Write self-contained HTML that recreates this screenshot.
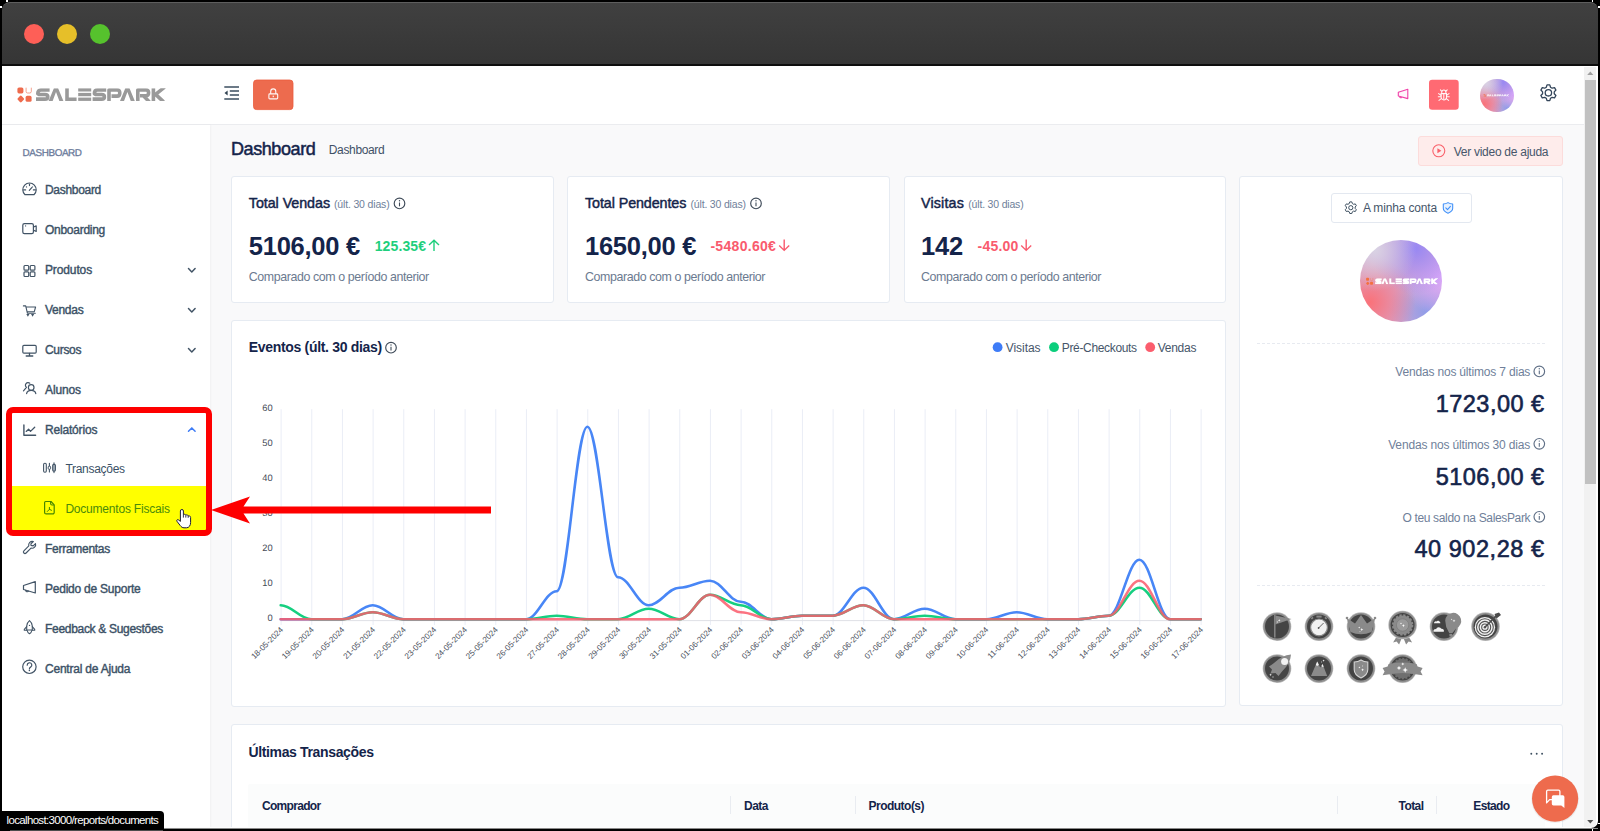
<!DOCTYPE html>
<html lang="pt">
<head>
<meta charset="utf-8">
<title>SalesPark - Dashboard</title>
<style>
*{box-sizing:border-box;margin:0;padding:0}
html,body{width:1600px;height:831px;overflow:hidden;background:#000}
body{position:relative;font-family:"Liberation Sans",sans-serif;}
.abs{position:absolute}
.t{position:absolute;white-space:pre;font-family:"Liberation Sans",sans-serif;}
svg text{font-family:"Liberation Sans",sans-serif;}
.card{position:absolute;background:#fff;border:1px solid #e6ebf2;border-radius:3px}
.ic{position:absolute;overflow:visible}
</style>
</head>
<body>
<!-- window chrome -->
<div class="abs" style="left:2px;top:2px;width:1596px;height:64px;border-radius:8px 8px 0 0;background:linear-gradient(#404040,#353535);border-top:1px solid #5e5e5e"></div>
<div class="abs" style="left:2px;top:64px;width:1596px;height:2px;background:#0d0d0d"></div>
<div class="abs" style="left:24px;top:24px;width:20px;height:20px;border-radius:50%;background:#fe5f57"></div>
<div class="abs" style="left:57px;top:24px;width:20px;height:20px;border-radius:50%;background:#e6bf29"></div>
<div class="abs" style="left:90px;top:24px;width:20px;height:20px;border-radius:50%;background:#56c22d"></div>

<!-- page -->
<div class="abs" id="page" style="left:2px;top:66px;width:1596px;height:762px;background:#f9f9fa;overflow:hidden"></div>
<!-- header -->
<div class="abs" style="left:2px;top:66px;width:1582px;height:59px;background:#fff;border-bottom:1px solid #ebecef"></div>
<!-- sidebar -->
<div class="abs" style="left:2px;top:125px;width:208px;height:703px;background:#fff;box-shadow:1px 0 2px rgba(0,0,0,0.035)"></div>

<!-- scrollbar -->
<div class="abs" style="left:1584px;top:66px;width:14px;height:762px;background:#fff"></div>
<div class="abs" style="left:1584px;top:67px;width:12px;height:761px;background:#f1f1f1"></div>
<div class="abs" style="left:1585px;top:80px;width:11px;height:404px;background:#c1c1c1"></div>
<svg class="ic" style="left:1584px;top:67px" width="12" height="12" viewBox="0 0 12 12"><path d="M3.2 8 L6.3 4.4 L9.4 8Z" fill="#a0a0a0"/></svg>
<svg class="ic" style="left:1584px;top:815.5px" width="12" height="12" viewBox="0 0 12 12"><path d="M3.2 4 L6.3 7.6 L9.4 4Z" fill="#505050"/></svg>

<!-- stat cards -->
<div class="card" style="left:231px;top:176px;width:323px;height:127px"></div>
<div class="card" style="left:567px;top:176px;width:323px;height:127px"></div>
<div class="card" style="left:904px;top:176px;width:322px;height:127px"></div>
<!-- chart card -->
<div class="card" style="left:231px;top:320px;width:995px;height:387px"></div>
<!-- right panel -->
<div class="card" style="left:1239px;top:176px;width:324px;height:530px"></div>
<!-- transactions card -->
<div class="card" style="left:231px;top:724px;width:1332px;height:120px"></div>
<div class="abs" style="left:248.4px;top:783.7px;width:1297px;height:45px;background:#fbfcfc;border-radius:2px 2px 0 0"></div>
<div class="abs" style="left:729.5px;top:796px;width:1px;height:18px;background:#e9ecf1"></div>
<div class="abs" style="left:854.5px;top:796px;width:1px;height:18px;background:#e9ecf1"></div>
<div class="abs" style="left:1336.5px;top:796px;width:1px;height:18px;background:#e9ecf1"></div>
<div class="abs" style="left:1436px;top:796px;width:1px;height:18px;background:#e9ecf1"></div>

<!-- "Ver video de ajuda" -->
<div class="abs" style="left:1418px;top:136px;width:145px;height:30px;background:#feeceb;border:1px solid #fcdcdb;border-radius:3px"></div>
<!-- "A minha conta" -->
<div class="abs" style="left:1331px;top:193px;width:141px;height:30px;background:#fff;border:1px solid #e3e8f0;border-radius:3px"></div>
<!-- dashed separators -->
<div class="abs" style="left:1257px;top:343px;width:288px;height:0;border-top:1px dashed #e7eaf0"></div>
<div class="abs" style="left:1257px;top:585.3px;width:288px;height:0;border-top:1px dashed #e7eaf0"></div>

<svg class="abs" style="left:0;top:0" width="1600" height="831" viewBox="0 0 1600 831">
<path d="M281.10 409.2V625M311.77 409.2V625M342.43 409.2V625M373.10 409.2V625M403.77 409.2V625M434.43 409.2V625M465.10 409.2V625M495.77 409.2V625M526.44 409.2V625M557.10 409.2V625M587.77 409.2V625M618.44 409.2V625M649.10 409.2V625M679.77 409.2V625M710.44 409.2V625M741.10 409.2V625M771.77 409.2V625M802.44 409.2V625M833.11 409.2V625M863.77 409.2V625M894.44 409.2V625M925.11 409.2V625M955.77 409.2V625M986.44 409.2V625M1017.11 409.2V625M1047.78 409.2V625M1078.44 409.2V625M1109.11 409.2V625M1139.78 409.2V625M1170.44 409.2V625M1201.11 409.2V625" stroke="#eaedf6" stroke-width="1" fill="none"/>
<path d="M280.7 620.6H1201.5" stroke="#dfe1e6" stroke-width="1" fill="none"/>
<text x="272.6" y="620.7" text-anchor="end" font-size="9.3" fill="#454b56" text-rendering="geometricPrecision">0</text>
<text x="272.6" y="585.7" text-anchor="end" font-size="9.3" fill="#454b56" text-rendering="geometricPrecision">10</text>
<text x="272.6" y="550.7" text-anchor="end" font-size="9.3" fill="#454b56" text-rendering="geometricPrecision">20</text>
<text x="272.6" y="515.7" text-anchor="end" font-size="9.3" fill="#454b56" text-rendering="geometricPrecision">30</text>
<text x="272.6" y="480.7" text-anchor="end" font-size="9.3" fill="#454b56" text-rendering="geometricPrecision">40</text>
<text x="272.6" y="445.7" text-anchor="end" font-size="9.3" fill="#454b56" text-rendering="geometricPrecision">50</text>
<text x="272.6" y="410.7" text-anchor="end" font-size="9.3" fill="#454b56" text-rendering="geometricPrecision">60</text>
<text x="283.7" y="630.3" text-anchor="end" font-size="8.1" fill="#4a505c" transform="rotate(-45 283.7 630.3)">18-05-2024</text>
<text x="314.4" y="630.3" text-anchor="end" font-size="8.1" fill="#4a505c" transform="rotate(-45 314.4 630.3)">19-05-2024</text>
<text x="345.0" y="630.3" text-anchor="end" font-size="8.1" fill="#4a505c" transform="rotate(-45 345.0 630.3)">20-05-2024</text>
<text x="375.7" y="630.3" text-anchor="end" font-size="8.1" fill="#4a505c" transform="rotate(-45 375.7 630.3)">21-05-2024</text>
<text x="406.4" y="630.3" text-anchor="end" font-size="8.1" fill="#4a505c" transform="rotate(-45 406.4 630.3)">22-05-2024</text>
<text x="437.0" y="630.3" text-anchor="end" font-size="8.1" fill="#4a505c" transform="rotate(-45 437.0 630.3)">23-05-2024</text>
<text x="467.7" y="630.3" text-anchor="end" font-size="8.1" fill="#4a505c" transform="rotate(-45 467.7 630.3)">24-05-2024</text>
<text x="498.4" y="630.3" text-anchor="end" font-size="8.1" fill="#4a505c" transform="rotate(-45 498.4 630.3)">25-05-2024</text>
<text x="529.0" y="630.3" text-anchor="end" font-size="8.1" fill="#4a505c" transform="rotate(-45 529.0 630.3)">26-05-2024</text>
<text x="559.7" y="630.3" text-anchor="end" font-size="8.1" fill="#4a505c" transform="rotate(-45 559.7 630.3)">27-05-2024</text>
<text x="590.4" y="630.3" text-anchor="end" font-size="8.1" fill="#4a505c" transform="rotate(-45 590.4 630.3)">28-05-2024</text>
<text x="621.0" y="630.3" text-anchor="end" font-size="8.1" fill="#4a505c" transform="rotate(-45 621.0 630.3)">29-05-2024</text>
<text x="651.7" y="630.3" text-anchor="end" font-size="8.1" fill="#4a505c" transform="rotate(-45 651.7 630.3)">30-05-2024</text>
<text x="682.4" y="630.3" text-anchor="end" font-size="8.1" fill="#4a505c" transform="rotate(-45 682.4 630.3)">31-05-2024</text>
<text x="713.0" y="630.3" text-anchor="end" font-size="8.1" fill="#4a505c" transform="rotate(-45 713.0 630.3)">01-06-2024</text>
<text x="743.7" y="630.3" text-anchor="end" font-size="8.1" fill="#4a505c" transform="rotate(-45 743.7 630.3)">02-06-2024</text>
<text x="774.4" y="630.3" text-anchor="end" font-size="8.1" fill="#4a505c" transform="rotate(-45 774.4 630.3)">03-06-2024</text>
<text x="805.0" y="630.3" text-anchor="end" font-size="8.1" fill="#4a505c" transform="rotate(-45 805.0 630.3)">04-06-2024</text>
<text x="835.7" y="630.3" text-anchor="end" font-size="8.1" fill="#4a505c" transform="rotate(-45 835.7 630.3)">05-06-2024</text>
<text x="866.4" y="630.3" text-anchor="end" font-size="8.1" fill="#4a505c" transform="rotate(-45 866.4 630.3)">06-06-2024</text>
<text x="897.0" y="630.3" text-anchor="end" font-size="8.1" fill="#4a505c" transform="rotate(-45 897.0 630.3)">07-06-2024</text>
<text x="927.7" y="630.3" text-anchor="end" font-size="8.1" fill="#4a505c" transform="rotate(-45 927.7 630.3)">08-06-2024</text>
<text x="958.4" y="630.3" text-anchor="end" font-size="8.1" fill="#4a505c" transform="rotate(-45 958.4 630.3)">09-06-2024</text>
<text x="989.0" y="630.3" text-anchor="end" font-size="8.1" fill="#4a505c" transform="rotate(-45 989.0 630.3)">10-06-2024</text>
<text x="1019.7" y="630.3" text-anchor="end" font-size="8.1" fill="#4a505c" transform="rotate(-45 1019.7 630.3)">11-06-2024</text>
<text x="1050.4" y="630.3" text-anchor="end" font-size="8.1" fill="#4a505c" transform="rotate(-45 1050.4 630.3)">12-06-2024</text>
<text x="1081.0" y="630.3" text-anchor="end" font-size="8.1" fill="#4a505c" transform="rotate(-45 1081.0 630.3)">13-06-2024</text>
<text x="1111.7" y="630.3" text-anchor="end" font-size="8.1" fill="#4a505c" transform="rotate(-45 1111.7 630.3)">14-06-2024</text>
<text x="1142.4" y="630.3" text-anchor="end" font-size="8.1" fill="#4a505c" transform="rotate(-45 1142.4 630.3)">15-06-2024</text>
<text x="1173.0" y="630.3" text-anchor="end" font-size="8.1" fill="#4a505c" transform="rotate(-45 1173.0 630.3)">16-06-2024</text>
<text x="1203.7" y="630.3" text-anchor="end" font-size="8.1" fill="#4a505c" transform="rotate(-45 1203.7 630.3)">17-06-2024</text>
<path d="M280.70 619.20C292.06 619.20 300.01 619.20 311.37 619.20C322.73 619.20 330.68 619.20 342.03 619.20C353.39 619.20 361.34 605.20 372.70 605.20C384.06 605.20 392.01 619.20 403.37 619.20C414.73 619.20 422.68 619.20 434.03 619.20C445.39 619.20 453.34 619.20 464.70 619.20C476.06 619.20 484.01 619.20 495.37 619.20C506.73 619.20 514.68 619.20 526.04 619.20C537.39 619.20 545.34 591.20 556.70 591.20C568.06 591.20 576.01 426.70 587.37 426.70C598.73 426.70 606.68 577.20 618.04 577.20C629.40 577.20 637.35 605.20 648.70 605.20C660.06 605.20 668.01 587.70 679.37 587.70C690.73 587.70 698.68 580.70 710.04 580.70C721.40 580.70 729.35 601.70 740.70 601.70C752.06 601.70 760.01 619.20 771.37 619.20C782.73 619.20 790.68 615.70 802.04 615.70C813.40 615.70 821.35 615.70 832.71 615.70C844.06 615.70 852.01 587.70 863.37 587.70C874.73 587.70 882.68 619.20 894.04 619.20C905.40 619.20 913.35 608.70 924.71 608.70C936.07 608.70 944.02 619.20 955.37 619.20C966.73 619.20 974.68 619.20 986.04 619.20C997.40 619.20 1005.35 612.20 1016.71 612.20C1028.07 612.20 1036.02 619.20 1047.38 619.20C1058.73 619.20 1066.68 619.20 1078.04 619.20C1089.40 619.20 1097.35 615.70 1108.71 615.70C1120.07 615.70 1128.02 559.70 1139.38 559.70C1150.73 559.70 1158.68 619.20 1170.04 619.20C1181.40 619.20 1189.35 619.20 1200.71 619.20" stroke="#4886f6" stroke-width="2.6" fill="none" stroke-linecap="round"/>
<path d="M280.70 605.20C292.06 605.20 300.01 619.20 311.37 619.20C322.73 619.20 330.68 619.20 342.03 619.20C353.39 619.20 361.34 612.20 372.70 612.20C384.06 612.20 392.01 619.20 403.37 619.20C414.73 619.20 422.68 619.20 434.03 619.20C445.39 619.20 453.34 619.20 464.70 619.20C476.06 619.20 484.01 619.20 495.37 619.20C506.73 619.20 514.68 619.20 526.04 619.20C537.39 619.20 545.34 615.70 556.70 615.70C568.06 615.70 576.01 619.20 587.37 619.20C598.73 619.20 606.68 619.20 618.04 619.20C629.40 619.20 637.35 608.70 648.70 608.70C660.06 608.70 668.01 619.20 679.37 619.20C690.73 619.20 698.68 594.70 710.04 594.70C721.40 594.70 729.35 605.20 740.70 605.20C752.06 605.20 760.01 619.20 771.37 619.20C782.73 619.20 790.68 615.70 802.04 615.70C813.40 615.70 821.35 615.70 832.71 615.70C844.06 615.70 852.01 605.20 863.37 605.20C874.73 605.20 882.68 619.20 894.04 619.20C905.40 619.20 913.35 615.70 924.71 615.70C936.07 615.70 944.02 619.20 955.37 619.20C966.73 619.20 974.68 619.20 986.04 619.20C997.40 619.20 1005.35 619.20 1016.71 619.20C1028.07 619.20 1036.02 619.20 1047.38 619.20C1058.73 619.20 1066.68 619.20 1078.04 619.20C1089.40 619.20 1097.35 615.70 1108.71 615.70C1120.07 615.70 1128.02 587.70 1139.38 587.70C1150.73 587.70 1158.68 619.20 1170.04 619.20C1181.40 619.20 1189.35 619.20 1200.71 619.20" stroke="#16cf80" stroke-width="2.6" fill="none" stroke-linecap="round"/>
<path d="M280.70 619.20C292.06 619.20 300.01 619.20 311.37 619.20C322.73 619.20 330.68 619.20 342.03 619.20C353.39 619.20 361.34 612.20 372.70 612.20C384.06 612.20 392.01 619.20 403.37 619.20C414.73 619.20 422.68 619.20 434.03 619.20C445.39 619.20 453.34 619.20 464.70 619.20C476.06 619.20 484.01 619.20 495.37 619.20C506.73 619.20 514.68 619.20 526.04 619.20C537.39 619.20 545.34 619.20 556.70 619.20C568.06 619.20 576.01 619.20 587.37 619.20C598.73 619.20 606.68 619.20 618.04 619.20C629.40 619.20 637.35 619.20 648.70 619.20C660.06 619.20 668.01 619.20 679.37 619.20C690.73 619.20 698.68 594.70 710.04 594.70C721.40 594.70 729.35 612.20 740.70 612.20C752.06 612.20 760.01 619.20 771.37 619.20C782.73 619.20 790.68 615.70 802.04 615.70C813.40 615.70 821.35 615.70 832.71 615.70C844.06 615.70 852.01 605.20 863.37 605.20C874.73 605.20 882.68 619.20 894.04 619.20C905.40 619.20 913.35 619.20 924.71 619.20C936.07 619.20 944.02 619.20 955.37 619.20C966.73 619.20 974.68 619.20 986.04 619.20C997.40 619.20 1005.35 619.20 1016.71 619.20C1028.07 619.20 1036.02 619.20 1047.38 619.20C1058.73 619.20 1066.68 619.20 1078.04 619.20C1089.40 619.20 1097.35 615.70 1108.71 615.70C1120.07 615.70 1128.02 580.70 1139.38 580.70C1150.73 580.70 1158.68 619.20 1170.04 619.20C1181.40 619.20 1189.35 619.20 1200.71 619.20" stroke="rgba(250,92,108,0.86)" stroke-width="2.6" fill="none" stroke-linecap="round"/>
</svg>

<!-- highlighted menu item -->
<div class="abs" style="left:12px;top:486px;width:195px;height:44px;background:#ffff00"></div>

<span class="t" style="left:22.6px;top:147.3px;font-size:9.9px;line-height:14px;color:#6b7b9b;letter-spacing:-0.396px;-webkit-text-stroke:0.3px currentColor;text-rendering:geometricPrecision;">DASHBOARD</span>
<span class="t" style="left:45.0px;top:182.2px;font-size:12px;line-height:17px;color:#3b5166;letter-spacing:-0.302px;-webkit-text-stroke:0.4px currentColor;">Dashboard</span>
<span class="t" style="left:45.0px;top:222.2px;font-size:12px;line-height:17px;color:#3b5166;letter-spacing:-0.272px;-webkit-text-stroke:0.4px currentColor;">Onboarding</span>
<span class="t" style="left:45.0px;top:262.2px;font-size:12px;line-height:17px;color:#3b5166;letter-spacing:-0.129px;-webkit-text-stroke:0.4px currentColor;">Produtos</span>
<span class="t" style="left:45.0px;top:302.2px;font-size:12px;line-height:17px;color:#3b5166;letter-spacing:-0.274px;-webkit-text-stroke:0.4px currentColor;">Vendas</span>
<span class="t" style="left:45.0px;top:342.2px;font-size:12px;line-height:17px;color:#3b5166;letter-spacing:-0.303px;-webkit-text-stroke:0.4px currentColor;">Cursos</span>
<span class="t" style="left:45.0px;top:382.0px;font-size:12px;line-height:17px;color:#3b5166;letter-spacing:-0.117px;-webkit-text-stroke:0.4px currentColor;">Alunos</span>
<span class="t" style="left:45.0px;top:421.5px;font-size:12px;line-height:17px;color:#3b5166;letter-spacing:-0.183px;-webkit-text-stroke:0.4px currentColor;">Relatórios</span>
<span class="t" style="left:65.4px;top:461.3px;font-size:12px;line-height:17px;color:#3b5166;letter-spacing:-0.285px;">Transações</span>
<span class="t" style="left:65.4px;top:501.1px;font-size:12px;line-height:17px;color:#4b8b0b;letter-spacing:-0.208px;">Documentos Fiscais</span>
<span class="t" style="left:45.0px;top:541.0px;font-size:12px;line-height:17px;color:#3b5166;letter-spacing:-0.276px;-webkit-text-stroke:0.4px currentColor;">Ferramentas</span>
<span class="t" style="left:45.0px;top:580.8px;font-size:12px;line-height:17px;color:#3b5166;letter-spacing:-0.231px;-webkit-text-stroke:0.4px currentColor;">Pedido de Suporte</span>
<span class="t" style="left:45.0px;top:620.7px;font-size:12px;line-height:17px;color:#3b5166;letter-spacing:-0.304px;-webkit-text-stroke:0.4px currentColor;">Feedback &amp; Sugestões</span>
<span class="t" style="left:45.0px;top:660.5px;font-size:12px;line-height:17px;color:#3b5166;letter-spacing:-0.215px;-webkit-text-stroke:0.4px currentColor;">Central de Ajuda</span>
<span class="t" style="left:231.0px;top:136.5px;font-size:18px;line-height:25px;color:#14244a;letter-spacing:-0.418px;-webkit-text-stroke:0.5px currentColor;">Dashboard</span>
<span class="t" style="left:328.8px;top:141.8px;font-size:12px;line-height:17px;color:#3f5066;letter-spacing:-0.358px;">Dashboard</span>
<span class="t" style="left:248.8px;top:192.5px;font-size:14.3px;line-height:20px;color:#14244a;letter-spacing:-0.056px;-webkit-text-stroke:0.45px currentColor;">Total Vendas</span>
<span class="t" style="left:334.0px;top:196.5px;font-size:10.5px;line-height:15px;color:#6f7f9a;letter-spacing:-0.163px;">(últ. 30 dias)</span>
<span class="t" style="left:248.8px;top:228.0px;font-size:25.5px;line-height:36px;color:#14244a;letter-spacing:-0.250px;font-weight:700;">5106,00 €</span>
<span class="t" style="left:374.7px;top:236.1px;font-size:14px;line-height:20px;color:#1fcf7d;letter-spacing:0.127px;font-weight:700;">125.35€</span>
<span class="t" style="left:248.8px;top:268.8px;font-size:12.4px;line-height:17px;color:#6b7a90;letter-spacing:-0.402px;">Comparado com o período anterior</span>
<span class="t" style="left:585.0px;top:192.5px;font-size:14.3px;line-height:20px;color:#14244a;letter-spacing:-0.083px;-webkit-text-stroke:0.45px currentColor;">Total Pendentes</span>
<span class="t" style="left:690.5px;top:196.5px;font-size:10.5px;line-height:15px;color:#6f7f9a;letter-spacing:-0.177px;">(últ. 30 dias)</span>
<span class="t" style="left:585.0px;top:228.0px;font-size:25.5px;line-height:36px;color:#14244a;letter-spacing:-0.250px;font-weight:700;">1650,00 €</span>
<span class="t" style="left:710.4px;top:236.1px;font-size:14px;line-height:20px;color:#f95b6e;letter-spacing:0.304px;font-weight:700;">-5480.60€</span>
<span class="t" style="left:585.0px;top:268.8px;font-size:12.4px;line-height:17px;color:#6b7a90;letter-spacing:-0.402px;">Comparado com o período anterior</span>
<span class="t" style="left:921.0px;top:192.5px;font-size:14.3px;line-height:20px;color:#14244a;letter-spacing:0.163px;-webkit-text-stroke:0.45px currentColor;">Visitas</span>
<span class="t" style="left:968.3px;top:196.5px;font-size:10.5px;line-height:15px;color:#6f7f9a;letter-spacing:-0.184px;">(últ. 30 dias)</span>
<span class="t" style="left:921.0px;top:228.0px;font-size:25.5px;line-height:36px;color:#14244a;letter-spacing:-0.182px;font-weight:700;">142</span>
<span class="t" style="left:977.5px;top:236.1px;font-size:14px;line-height:20px;color:#f95b6e;letter-spacing:0.216px;font-weight:700;">-45.00</span>
<span class="t" style="left:921.0px;top:268.8px;font-size:12.4px;line-height:17px;color:#6b7a90;letter-spacing:-0.402px;">Comparado com o período anterior</span>
<span class="t" style="left:248.8px;top:337.3px;font-size:14px;line-height:20px;color:#14244a;letter-spacing:-0.320px;font-weight:700;">Eventos (últ. 30 dias)</span>
<span class="t" style="left:1005.8px;top:340.0px;font-size:12px;line-height:17px;color:#46566a;letter-spacing:-0.063px;">Visitas</span>
<span class="t" style="left:1061.8px;top:340.0px;font-size:12px;line-height:17px;color:#46566a;letter-spacing:-0.344px;">Pré-Checkouts</span>
<span class="t" style="left:1157.7px;top:340.0px;font-size:12px;line-height:17px;color:#46566a;letter-spacing:-0.258px;">Vendas</span>
<span class="t" style="left:1453.7px;top:143.5px;font-size:12px;line-height:17px;color:#46566a;letter-spacing:-0.268px;">Ver video de ajuda</span>
<span class="t" style="left:1363.0px;top:200.2px;font-size:12px;line-height:17px;color:#46566a;letter-spacing:-0.159px;">A minha conta</span>
<span class="t" style="left:1395.3px;top:364.0px;font-size:12px;line-height:17px;color:#6f7f9a;letter-spacing:-0.181px;">Vendas nos últimos 7 dias</span>
<span class="t" style="left:1435.7px;top:387.7px;font-size:23.5px;line-height:33px;color:#14244a;letter-spacing:0.484px;-webkit-text-stroke:0.6px currentColor;">1723,00 €</span>
<span class="t" style="left:1388.2px;top:436.5px;font-size:12px;line-height:17px;color:#6f7f9a;letter-spacing:-0.157px;">Vendas nos últimos 30 dias</span>
<span class="t" style="left:1435.7px;top:460.5px;font-size:23.5px;line-height:33px;color:#14244a;letter-spacing:0.484px;-webkit-text-stroke:0.6px currentColor;">5106,00 €</span>
<span class="t" style="left:1402.5px;top:509.5px;font-size:12px;line-height:17px;color:#6f7f9a;letter-spacing:-0.349px;">O teu saldo na SalesPark</span>
<span class="t" style="left:1414.4px;top:533.2px;font-size:23.5px;line-height:33px;color:#14244a;letter-spacing:0.549px;-webkit-text-stroke:0.6px currentColor;">40 902,28 €</span>
<span class="t" style="left:248.4px;top:742.2px;font-size:14px;line-height:20px;color:#14244a;letter-spacing:-0.351px;font-weight:700;">Últimas Transações</span>
<span class="t" style="left:262.0px;top:797.5px;font-size:12px;line-height:17px;color:#14244a;letter-spacing:-0.686px;font-weight:700;">Comprador</span>
<span class="t" style="left:744.0px;top:797.5px;font-size:12px;line-height:17px;color:#14244a;letter-spacing:-0.504px;font-weight:700;">Data</span>
<span class="t" style="left:868.5px;top:797.5px;font-size:12px;line-height:17px;color:#14244a;letter-spacing:-0.516px;font-weight:700;">Produto(s)</span>
<span class="t" style="left:1398.5px;top:797.5px;font-size:12px;line-height:17px;color:#14244a;letter-spacing:-0.556px;font-weight:700;">Total</span>
<span class="t" style="left:1473.3px;top:797.5px;font-size:12px;line-height:17px;color:#14244a;letter-spacing:-0.669px;font-weight:700;">Estado</span>
<span class="t" style="left:6.5px;top:812.2px;font-size:11.5px;line-height:16px;color:#ffffff;letter-spacing:-0.653px;z-index:60;">localhost:3000/reports/documents</span>

<div class="abs" style="left:1360px;top:240.3px;width:82px;height:82px;border-radius:50%;background:radial-gradient(circle at 18% 12%, #d9d3e4 0%, rgba(217,211,228,0) 42%),radial-gradient(circle at 68% 10%, #9888f3 0%, rgba(152,136,243,0) 50%),radial-gradient(circle at 100% 45%, #dfa9fb 0%, rgba(223,169,251,0) 42%),radial-gradient(circle at 12% 76%, #fa7279 0%, rgba(250,114,121,0) 48%),radial-gradient(circle at 82% 88%, #8f9de9 0%, rgba(143,157,233,0) 40%),#d6a7cf"></div><div class="abs" style="left:1480.4px;top:78.7px;width:33.2px;height:33.2px;border-radius:50%;background:radial-gradient(circle at 18% 12%, #d9d3e4 0%, rgba(217,211,228,0) 42%),radial-gradient(circle at 68% 10%, #9888f3 0%, rgba(152,136,243,0) 50%),radial-gradient(circle at 100% 45%, #dfa9fb 0%, rgba(223,169,251,0) 42%),radial-gradient(circle at 12% 76%, #fa7279 0%, rgba(250,114,121,0) 48%),radial-gradient(circle at 82% 88%, #8f9de9 0%, rgba(143,157,233,0) 40%),#d6a7cf"></div><svg class="abs" style="left:0;top:0;z-index:6" width="1600" height="831" viewBox="0 0 1600 831"><g transform="translate(1366 277.8) scale(0.485)"><rect x="0.2" y="0" width="6" height="6" rx="1.6" fill="#f4703f"/><path d="M8.9 0.3V4.1A1.5 1.5 0 0 0 10.4 5.6H12.6A1.5 1.5 0 0 0 14.1 4.1V0.3" fill="none" stroke="#f4703f" stroke-width="0.9" opacity="0.7"/><rect x="0.9" y="8.9" width="5.4" height="5.4" rx="1.2" fill="#f4703f" transform="rotate(45 3.6 11.6)"/><rect x="8.4" y="8.4" width="6" height="6" rx="1.6" fill="#f4703f"/><clipPath id="lcb"><rect x="-1" y="0" width="132" height="12.7"/></clipPath><g transform="translate(18.8 0.8)" fill="#ffffff" stroke="none" clip-path="url(#lcb)"><path d="M13.6 2.05H4.8Q2.05 2.05 2.05 5.35Q2.05 6.35 4.6 6.35H9Q11.55 6.35 11.55 8.75Q11.55 10.649999999999999 9 10.649999999999999H0.0" fill="none" stroke="#ffffff" stroke-width="4.1" stroke-linejoin="round" stroke-linecap="butt"/><path d="M12.6 12.7L17.9 0H22.1L27.4 12.7H22.808L20.0 4.305L17.192 12.7Z"/><path d="M29.2 0H33.3V8.927999999999999H40.6V12.7H29.2Z"/><rect x="42.2" y="0" width="13" height="3.772"/><rect x="42.2" y="4.4639999999999995" width="13" height="3.772"/><rect x="42.2" y="8.927999999999999" width="13" height="3.772"/><path d="M70.2 2.05H61.4Q58.65 2.05 58.65 5.35Q58.65 6.35 61.2 6.35H65.6Q68.15 6.35 68.15 8.75Q68.15 10.649999999999999 65.6 10.649999999999999H56.6" fill="none" stroke="#ffffff" stroke-width="4.1" stroke-linejoin="round" stroke-linecap="butt"/><path d="M73.25 12.7V2.05H81.2Q83.55 2.05 83.55 4.7Q83.55 7.9 81.2 7.9H75.5" fill="none" stroke="#ffffff" stroke-width="4.1" stroke-linejoin="round" stroke-linecap="butt"/><path d="M84.0 12.7L89.3 0H93.5L98.8 12.7H94.208L91.4 4.305L88.592 12.7Z"/><path d="M102.05 12.7V2.05H110Q112.35000000000001 2.05 112.35000000000001 4.5Q112.35000000000001 7.5 110 7.5H104M107.4 7.5L113.4 13.7" fill="none" stroke="#ffffff" stroke-width="4.1" stroke-linejoin="round" stroke-linecap="butt"/><path d="M117.64999999999999 0V12.7M128.6 -1L119.6 6.2L127.6 13.7" fill="none" stroke="#ffffff" stroke-width="4.1" stroke-linejoin="round" stroke-linecap="butt"/></g></g><g transform="translate(1483.6 94.1) scale(0.172)"><rect x="0.2" y="0" width="6" height="6" rx="1.6" fill="#f4703f"/><path d="M8.9 0.3V4.1A1.5 1.5 0 0 0 10.4 5.6H12.6A1.5 1.5 0 0 0 14.1 4.1V0.3" fill="none" stroke="#f4703f" stroke-width="0.9" opacity="0.7"/><rect x="0.9" y="8.9" width="5.4" height="5.4" rx="1.2" fill="#f4703f" transform="rotate(45 3.6 11.6)"/><rect x="8.4" y="8.4" width="6" height="6" rx="1.6" fill="#f4703f"/><clipPath id="lcc"><rect x="-1" y="0" width="132" height="12.7"/></clipPath><g transform="translate(18.8 0.8)" fill="#ffffff" stroke="none" clip-path="url(#lcc)"><path d="M13.6 2.3H4.8Q2.3 2.3 2.3 5.35Q2.3 6.35 4.6 6.35H9Q11.3 6.35 11.3 8.75Q11.3 10.399999999999999 9 10.399999999999999H0.0" fill="none" stroke="#ffffff" stroke-width="4.6" stroke-linejoin="round" stroke-linecap="butt"/><path d="M12.6 12.7L17.9 0H22.1L27.4 12.7H22.247999999999998L20.0 4.83L17.752 12.7Z"/><path d="M29.2 0H33.8V8.468H40.6V12.7H29.2Z"/><rect x="42.2" y="0" width="13" height="4.232"/><rect x="42.2" y="4.234" width="13" height="4.232"/><rect x="42.2" y="8.468" width="13" height="4.232"/><path d="M70.2 2.3H61.4Q58.9 2.3 58.9 5.35Q58.9 6.35 61.2 6.35H65.6Q67.9 6.35 67.9 8.75Q67.9 10.399999999999999 65.6 10.399999999999999H56.6" fill="none" stroke="#ffffff" stroke-width="4.6" stroke-linejoin="round" stroke-linecap="butt"/><path d="M73.5 12.7V2.3H81.2Q83.3 2.3 83.3 4.7Q83.3 7.9 81.2 7.9H75.5" fill="none" stroke="#ffffff" stroke-width="4.6" stroke-linejoin="round" stroke-linecap="butt"/><path d="M84.0 12.7L89.3 0H93.5L98.8 12.7H93.648L91.4 4.83L89.152 12.7Z"/><path d="M102.3 12.7V2.3H110Q112.10000000000001 2.3 112.10000000000001 4.5Q112.10000000000001 7.5 110 7.5H104M107.4 7.5L113.4 13.7" fill="none" stroke="#ffffff" stroke-width="4.6" stroke-linejoin="round" stroke-linecap="butt"/><path d="M117.89999999999999 0V12.7M128.6 -1L119.6 6.2L127.6 13.7" fill="none" stroke="#ffffff" stroke-width="4.6" stroke-linejoin="round" stroke-linecap="butt"/></g></g></svg>
<svg class="abs" style="left:0;top:0;z-index:5" width="1600" height="831" viewBox="0 0 1600 831"><g transform="translate(17.2 87.4) scale(1.0)"><rect x="0.2" y="0" width="6" height="6" rx="1.6" fill="#ee6b4d"/><path d="M8.9 0.3V4.1A1.5 1.5 0 0 0 10.4 5.6H12.6A1.5 1.5 0 0 0 14.1 4.1V0.3" fill="none" stroke="#ee6b4d" stroke-width="0.9" opacity="0.7"/><rect x="0.9" y="8.9" width="5.4" height="5.4" rx="1.2" fill="#ee6b4d" transform="rotate(45 3.6 11.6)"/><rect x="8.4" y="8.4" width="6" height="6" rx="1.6" fill="#ee6b4d"/><clipPath id="lca"><rect x="-1" y="0" width="132" height="12.7"/></clipPath><g transform="translate(18.8 0.8)" fill="#9a9a9a" stroke="none" clip-path="url(#lca)"><path d="M13.6 1.8H4.8Q1.8 1.8 1.8 5.35Q1.8 6.35 4.6 6.35H9Q11.799999999999999 6.35 11.799999999999999 8.75Q11.799999999999999 10.899999999999999 9 10.899999999999999H0.0" fill="none" stroke="#9a9a9a" stroke-width="3.6" stroke-linejoin="round" stroke-linecap="butt"/><path d="M12.6 12.7L17.9 0H22.1L27.4 12.7H23.368L20.0 3.7800000000000002L16.632 12.7Z"/><path d="M29.2 0H32.8V9.387999999999998H40.6V12.7H29.2Z"/><rect x="42.2" y="0" width="13" height="3.3120000000000003"/><rect x="42.2" y="4.693999999999999" width="13" height="3.3120000000000003"/><rect x="42.2" y="9.387999999999998" width="13" height="3.3120000000000003"/><path d="M70.2 1.8H61.4Q58.4 1.8 58.4 5.35Q58.4 6.35 61.2 6.35H65.6Q68.4 6.35 68.4 8.75Q68.4 10.899999999999999 65.6 10.899999999999999H56.6" fill="none" stroke="#9a9a9a" stroke-width="3.6" stroke-linejoin="round" stroke-linecap="butt"/><path d="M73.0 12.7V1.8H81.2Q83.8 1.8 83.8 4.7Q83.8 7.9 81.2 7.9H75.5" fill="none" stroke="#9a9a9a" stroke-width="3.6" stroke-linejoin="round" stroke-linecap="butt"/><path d="M84.0 12.7L89.3 0H93.5L98.8 12.7H94.768L91.4 3.7800000000000002L88.032 12.7Z"/><path d="M101.8 12.7V1.8H110Q112.60000000000001 1.8 112.60000000000001 4.5Q112.60000000000001 7.5 110 7.5H104M107.4 7.5L113.4 13.7" fill="none" stroke="#9a9a9a" stroke-width="3.6" stroke-linejoin="round" stroke-linecap="butt"/><path d="M117.39999999999999 0V12.7M128.6 -1L119.6 6.2L127.6 13.7" fill="none" stroke="#9a9a9a" stroke-width="3.6" stroke-linejoin="round" stroke-linecap="butt"/></g></g>
<path d="M224.3 87.1H239M229.8 91H239M229.8 95H239M224.3 98.9H239" stroke="#3d4f60" stroke-width="1.5" fill="none"/>
<path d="M227.6 90.6V95.4L224.5 93Z" fill="#2f4050"/>
<rect x="253.5" y="80" width="39.5" height="29.6" rx="3.2" fill="#ed6b4e" stroke="#eb5c3c" stroke-width="0.8"/>
<rect x="268.9" y="93.9" width="8.8" height="5" rx="0.9" fill="none" stroke="#fff" stroke-width="1.1" opacity="0.95"/>
<path d="M270.7 93.7V91.4A2.55 2.55 0 0 1 275.8 91.4V93.7" fill="none" stroke="#fff" stroke-width="1.1" opacity="0.95"/>
<rect x="272.7" y="95.6" width="1.1" height="1.6" fill="#fff"/>
<path d="M1398.3 92.3L1407.8 89.2V98.6L1398.3 96Z" fill="#fff3fa" stroke="#f040a8" stroke-width="1.1" stroke-linejoin="round"/>
<path d="M1399.6 96.6C1399.8 97.8 1401 98.1 1401.9 97.3" fill="none" stroke="#f040a8" stroke-width="1.1"/>
<rect x="1429" y="79.8" width="29.7" height="29.9" rx="3.2" fill="#ff6a73"/>
<path d="M1441.1 93.6H1446.5V96.7A2.7 3.3 0 0 1 1441.1 96.7Z" stroke="#fff" fill="none" stroke-width="1.05" stroke-linecap="round" opacity="0.95"/>
<path d="M1441.7 92.4A2.1 2.3 0 0 1 1445.9 92.4" stroke="#fff" fill="none" stroke-width="1.05" stroke-linecap="round" opacity="0.95"/>
<path d="M1443.8 94.6V99.2M1441 95.2L1438.6 93.6M1446.6 95.2L1449 93.6M1440.9 96.8H1438.3M1446.7 96.8H1449.3M1441.3 98.6L1439 100.4M1446.3 98.6L1448.6 100.4M1441.6 91.2L1440.4 89.9M1446 91.2L1447.2 89.9" stroke="#fff" fill="none" stroke-width="1.05" stroke-linecap="round" opacity="0.95"/>
<path d="M1550.51 87.29L1549.79 84.92L1547.01 84.92L1546.29 87.29L1544.69 88.21L1542.27 87.66L1540.88 90.06L1542.57 91.88L1542.57 93.72L1540.88 95.54L1542.27 97.94L1544.69 97.39L1546.29 98.31L1547.01 100.68L1549.79 100.68L1550.51 98.31L1552.11 97.39L1554.53 97.94L1555.92 95.54L1554.23 93.72L1554.23 91.88L1555.92 90.06L1554.53 87.66L1552.11 88.21Z" fill="none" stroke="#33455a" stroke-width="1.3" stroke-linejoin="round"/><circle cx="1548.4" cy="92.8" r="3.2" fill="none" stroke="#33455a" stroke-width="1.3"/><path d="M25.04 194.7A6.7 6.7 0 1 1 33.96 194.7Z" fill="none" stroke="#425466" stroke-width="1.2" stroke-linecap="round" stroke-linejoin="round" />
<path d="M29.5 184V185.6M23.6 189.9H25.6M33.4 189.9H35.4M29.3 190.4L32 187.4" fill="none" stroke="#425466" stroke-width="1.2" stroke-linecap="round" stroke-linejoin="round" />
<circle cx="26.5" cy="186.9" r="0.65" fill="#425466"/><circle cx="32.6" cy="186.7" r="0.5" fill="#425466"/>
<rect x="22.8" y="223.6" width="10.6" height="10" rx="1.6" fill="none" stroke="#425466" stroke-width="1.2"/>
<path d="M33.6 227L36.2 225.9V231.4L33.6 230.3" fill="none" stroke="#425466" stroke-width="1.2" stroke-linecap="round" stroke-linejoin="round" />
<circle cx="25.6" cy="225.9" r="0.6" fill="#425466"/>
<rect x="24" y="265.5" width="4.7" height="4.7" rx="0.9" fill="none" stroke="#425466" stroke-width="1.2"/>
<rect x="30.2" y="265.5" width="4.7" height="4.7" rx="0.9" fill="none" stroke="#425466" stroke-width="1.2"/>
<rect x="24" y="271.8" width="4.7" height="4.7" rx="0.9" fill="none" stroke="#425466" stroke-width="1.2"/>
<rect x="30.2" y="271.8" width="4.7" height="4.7" rx="0.9" fill="none" stroke="#425466" stroke-width="1.2"/>
<path d="M23.4 305.9H25.7L27.4 313.2H35.3M26.4 307H35.6L34.3 311.7H27.2" fill="none" stroke="#425466" stroke-width="1.1" stroke-linecap="round" stroke-linejoin="round" />
<path d="M26.3 314L27.9 316.8L29.5 314ZM31 314L32.6 316.8L34.2 314Z" fill="#425466"/>
<rect x="22.8" y="345.4" width="13.4" height="7.8" rx="1.1" fill="none" stroke="#425466" stroke-width="1.2"/>
<path d="M29.5 353.4V355.6M26.2 356H32.8" fill="none" stroke="#425466" stroke-width="1.3" stroke-linecap="round" stroke-linejoin="round" />
<circle cx="31.2" cy="387.5" r="2.8" fill="none" stroke="#425466" stroke-width="1.2"/>
<path d="M26.6 393.6C27 391.5 28.6 390.4 31.2 390.4C33.8 390.4 35.4 391.5 35.8 393.6" fill="none" stroke="#425466" stroke-width="1.2" stroke-linecap="round" stroke-linejoin="round" />
<path d="M29.8 383.2A2.6 2.6 0 1 0 26.4 387.3L23.5 390.8" fill="none" stroke="#425466" stroke-width="1.2" stroke-linecap="round" stroke-linejoin="round" />
<path d="M23.9 424.9V435.2H35.6" fill="none" stroke="#425466" stroke-width="1.4" stroke-linecap="round" stroke-linejoin="round" />
<path d="M26.2 431.4L28.6 429.2L30.5 431.4L34.7 427.3" fill="none" stroke="#425466" stroke-width="1.3" stroke-linecap="round" stroke-linejoin="round" />
<rect x="43.6" y="463.2" width="2.7" height="9" rx="1.2" fill="none" stroke="#425466" stroke-width="1.1"/>
<path d="M49.4 463.2V472M54 462.8V464.2M54 471.2V472.6" fill="none" stroke="#425466" stroke-width="1.1" stroke-linecap="round" stroke-linejoin="round" />
<rect x="48.2" y="466.2" width="2.4" height="3.1" rx="0.9" fill="#fff" stroke="#425466" stroke-width="1"/>
<rect x="52.7" y="464.4" width="2.7" height="6.7" rx="1.1" fill="#a9b3bd" stroke="#425466" stroke-width="1.1"/>
<path d="M33.3 541.5A3.6 3.6 0 0 0 28.8 545.9L23.9 550.8A1.5 1.5 0 0 0 26.1 553L31 548.1A3.6 3.6 0 0 0 35.5 543.6L33.2 545.9L31 545.4L30.9 543.9Z" fill="none" stroke="#425466" stroke-width="1.15" stroke-linecap="round" stroke-linejoin="round" />
<path d="M23.5 585.5L35.3 581.6V593L23.5 589.5Z" fill="none" stroke="#425466" stroke-width="1.2" stroke-linecap="round" stroke-linejoin="round" />
<path d="M25.6 590.3C25.7 591.8 27.5 592.3 28.6 591.2" fill="none" stroke="#425466" stroke-width="1.1" stroke-linecap="round" stroke-linejoin="round" />
<path d="M29.5 620.6C27.6 622.2 26.7 623.9 26.7 626V630H32.3V626C32.3 623.9 31.4 622.2 29.5 620.6Z" fill="none" stroke="#425466" stroke-width="1.1" stroke-linecap="round" stroke-linejoin="round" />
<path d="M26.7 626.6L24.3 629.4V630.2H26.7M32.3 626.6L34.7 629.4V630.2H32.3" fill="none" stroke="#425466" stroke-width="1.1" stroke-linecap="round" stroke-linejoin="round" />
<path d="M27.2 630.5C27.5 632.2 28.4 633.2 29.5 633.8C30.6 633.2 31.5 632.2 31.8 630.5" fill="none" stroke="#425466" stroke-width="1.1" stroke-linecap="round" stroke-linejoin="round" />
<circle cx="29.5" cy="625.4" r="0.7" fill="#425466"/>
<circle cx="29.4" cy="666.8" r="6.7" fill="none" stroke="#425466" stroke-width="1.2"/>
<path d="M27.2 665.2A2.3 2.3 0 1 1 30.6 667.1C29.7 667.6 29.4 668 29.4 668.9" fill="none" stroke="#425466" stroke-width="1.2" stroke-linecap="round" stroke-linejoin="round" />
<circle cx="29.4" cy="670.5" r="0.75" fill="#425466"/>
<path d="M188.5 268.6L191.8 272.0L195.10000000000002 268.6" fill="none" stroke="#425466" stroke-width="1.5" stroke-linecap="round" stroke-linejoin="round"/>
<path d="M188.5 308.6L191.8 312.0L195.10000000000002 308.6" fill="none" stroke="#425466" stroke-width="1.5" stroke-linecap="round" stroke-linejoin="round"/>
<path d="M188.5 348.6L191.8 352.0L195.10000000000002 348.6" fill="none" stroke="#425466" stroke-width="1.5" stroke-linecap="round" stroke-linejoin="round"/>
<path d="M188.5 431.3L191.8 427.90000000000003L195.10000000000002 431.3" fill="none" stroke="#3f7df6" stroke-width="1.5" stroke-linecap="round" stroke-linejoin="round"/>
<path d="M45.6 501.5H51L54.2 504.8V512.4A1.5 1.5 0 0 1 52.7 513.9H46.1A1.5 1.5 0 0 1 44.6 512.4V502.5A1 1 0 0 1 45.6 501.5Z" fill="none" stroke="#478700" stroke-width="1.2" stroke-linejoin="round"/>
<path d="M50.6 501.8V503.6A1.4 1.4 0 0 0 52 505H54" fill="none" stroke="#478700" stroke-width="1.1"/>
<path d="M49.4 507.4V509.3L47.3 511.5M49.4 509.3L51.5 510.3" fill="none" stroke="#478700" stroke-width="1" stroke-linecap="round"/><circle cx="399.5" cy="203.4" r="5.3" fill="none" stroke="#3f4b59" stroke-width="1.15"/><path d="M399.5 202.5V206.3" stroke="#3f4b59" stroke-width="1.1" fill="none"/><circle cx="399.5" cy="200.70000000000002" r="0.7" fill="#3f4b59"/>
<circle cx="756" cy="203.4" r="5.3" fill="none" stroke="#3f4b59" stroke-width="1.15"/><path d="M756 202.5V206.3" stroke="#3f4b59" stroke-width="1.1" fill="none"/><circle cx="756" cy="200.70000000000002" r="0.7" fill="#3f4b59"/>
<circle cx="391" cy="347.7" r="5.3" fill="none" stroke="#3f4b59" stroke-width="1.15"/><path d="M391 346.8V350.59999999999997" stroke="#3f4b59" stroke-width="1.1" fill="none"/><circle cx="391" cy="345.0" r="0.7" fill="#3f4b59"/>
<circle cx="1539.3" cy="371.4" r="5.3" fill="none" stroke="#5f6f86" stroke-width="1.15"/><path d="M1539.3 370.5V374.29999999999995" stroke="#5f6f86" stroke-width="1.1" fill="none"/><circle cx="1539.3" cy="368.7" r="0.7" fill="#5f6f86"/>
<circle cx="1539.3" cy="443.8" r="5.3" fill="none" stroke="#5f6f86" stroke-width="1.15"/><path d="M1539.3 442.90000000000003V446.7" stroke="#5f6f86" stroke-width="1.1" fill="none"/><circle cx="1539.3" cy="441.1" r="0.7" fill="#5f6f86"/>
<circle cx="1539.3" cy="516.8" r="5.3" fill="none" stroke="#5f6f86" stroke-width="1.15"/><path d="M1539.3 515.9V519.6999999999999" stroke="#5f6f86" stroke-width="1.1" fill="none"/><circle cx="1539.3" cy="514.0999999999999" r="0.7" fill="#5f6f86"/>
<path d="M434 251V240.2M429.0 245.0L434 240.2L439.0 245.0" fill="none" stroke="#1fcf7d" stroke-width="1.4" stroke-linejoin="miter"/>
<path d="M784.2 239.6V250.4M779.2 245.6L784.2 250.4L789.2 245.6" fill="none" stroke="#f95b6e" stroke-width="1.4" stroke-linejoin="miter"/>
<path d="M1026.2 239.6V250.4M1021.2 245.6L1026.2 250.4L1031.2 245.6" fill="none" stroke="#f95b6e" stroke-width="1.4" stroke-linejoin="miter"/>
<circle cx="997.6" cy="347.2" r="4.9" fill="#3e7cf7"/>
<circle cx="1054" cy="347.2" r="4.9" fill="#0bce7c"/>
<circle cx="1150.2" cy="347.2" r="4.9" fill="#fb5d6d"/>
<circle cx="1438.8" cy="150.8" r="6" fill="none" stroke="#f9606a" stroke-width="1.1"/>
<path d="M1437.4 148.3V153.3L1441.4 150.8Z" fill="#f9606a"/>
<path d="M1352.38 203.59L1351.82 201.89L1349.78 201.89L1349.22 203.59L1348.03 204.28L1346.28 203.91L1345.26 205.68L1346.45 207.01L1346.45 208.39L1345.26 209.72L1346.28 211.49L1348.03 211.12L1349.22 211.81L1349.78 213.51L1351.82 213.51L1352.38 211.81L1353.57 211.12L1355.32 211.49L1356.34 209.72L1355.15 208.39L1355.15 207.01L1356.34 205.68L1355.32 203.91L1353.57 204.28Z" fill="none" stroke="#3d4f60" stroke-width="1.0" stroke-linejoin="round"/><circle cx="1350.8" cy="207.7" r="2.1" fill="none" stroke="#3d4f60" stroke-width="1.0"/>
<path d="M1448 202.6C1449.6 203.6 1451 204 1452.7 204.1V208.3C1452.7 210.6 1450.6 212.2 1448 213.2C1445.4 212.2 1443.3 210.6 1443.3 208.3V204.1C1445 204 1446.4 203.6 1448 202.6Z" fill="#e6f1ff" stroke="#3d8ef8" stroke-width="1.05" stroke-linejoin="round"/>
<path d="M1445.8 207.9L1447.5 209.6L1450.4 206.3" fill="none" stroke="#3d8ef8" stroke-width="1.05" stroke-linecap="round" stroke-linejoin="round"/>
<circle cx="1531.3" cy="753.8" r="0.95" fill="#3d4f60"/><circle cx="1536.7" cy="753.8" r="0.95" fill="#3d4f60"/><circle cx="1542.1" cy="753.8" r="0.95" fill="#3d4f60"/><circle cx="1277" cy="626.6" r="14.3" fill="#b9b9b9"/><circle cx="1277" cy="626.6" r="13.6" fill="#8d8d8d"/><circle cx="1277" cy="626.6" r="12" fill="#444444"/><path d="M1274.8 615.1V637.6" stroke="#8a8a8a" stroke-width="1.4"/><path d="M1275.4 615.6L1291.5 619.1L1275.4 624.6Z" fill="#8a8a8a"/><path d="M1279.2 619.0000000000001L1279.564 619.936L1280.5 620.3000000000001L1279.564 620.6640000000001L1279.2 621.6L1278.836 620.6640000000001L1277.9 620.3000000000001L1278.836 619.936Z" fill="#fff"/><path d="M1277.2 621.1L1277.452 621.748L1278.1000000000001 622.0L1277.452 622.252L1277.2 622.9L1276.948 622.252L1276.3 622.0L1276.948 621.748Z" fill="#fff"/><circle cx="1319" cy="626.6" r="14.3" fill="#b9b9b9"/><circle cx="1319" cy="626.6" r="13.6" fill="#8d8d8d"/><circle cx="1319" cy="626.6" r="12" fill="#444444"/><rect x="1316.4" y="615.6" width="5.2" height="2" fill="#8a8a8a"/><path d="M1311.4 619.0L1313 617.4M1326.6 619.0L1325 617.4" stroke="#8a8a8a" stroke-width="1.6"/><circle cx="1319" cy="627.4" r="8.4" fill="#f2f2f2" stroke="#8a8a8a" stroke-width="1.2"/><path d="M1318.6 628.0L1323.6 623.0" stroke="#555" stroke-width="0.9"/><circle cx="1318.6" cy="628.0" r="0.9" fill="#555"/><circle cx="1361" cy="626.6" r="14.3" fill="#b9b9b9"/><circle cx="1361" cy="626.6" r="13.6" fill="#8d8d8d"/><circle cx="1361" cy="626.6" r="12" fill="#444444"/><path d="M1346.7 618.0L1355 623.6L1361 615.0L1367 623.6L1375.3 618.0L1371.6 632.1Q1361 636.6 1350.4 632.1Z" fill="#8a8a8a"/><circle cx="1347" cy="618.0" r="1.3" fill="#8a8a8a"/><circle cx="1375" cy="618.0" r="1.3" fill="#8a8a8a"/><path d="M1361.8 628.0L1362.248 629.152L1363.3999999999999 629.6L1362.248 630.048L1361.8 631.2L1361.3519999999999 630.048L1360.2 629.6L1361.3519999999999 629.152Z" fill="#fff"/><path d="M1359.2 626.6L1359.48 627.32L1360.2 627.6L1359.48 627.88L1359.2 628.6L1358.92 627.88L1358.2 627.6L1358.92 627.32Z" fill="#fff"/><path d="M1360 630.8000000000001L1360.224 631.376L1360.8 631.6L1360.224 631.8240000000001L1360 632.4L1359.776 631.8240000000001L1359.2 631.6L1359.776 631.376Z" fill="#fff"/><path d="M1398.1 634.0L1393.1 642.5L1396.6 641.5L1399.1 644.5L1402.6 636.0L1406.1 644.5L1408.6 641.5L1412.1 642.5L1407.1 634.0Z" fill="#8a8a8a"/><circle cx="1402.6" cy="625.0" r="14.3" fill="#b9b9b9"/><circle cx="1402.6" cy="625.0" r="13.6" fill="#8d8d8d"/><circle cx="1402.6" cy="625.0" r="12" fill="#444444"/><circle cx="1402.6" cy="625.0" r="9.6" fill="#8a8a8a" stroke="#8a8a8a" stroke-width="2.2" stroke-dasharray="2.2 1.6"/><circle cx="1402.6" cy="625.0" r="6.2" fill="#9a9a9a" stroke="#7a7a7a" stroke-width="0.7"/><path d="M1403.3999999999999 624.0L1403.848 625.152L1404.9999999999998 625.6L1403.848 626.048L1403.3999999999999 627.2L1402.9519999999998 626.048L1401.8 625.6L1402.9519999999998 625.152Z" fill="#fff"/><path d="M1401.0 622.4L1401.28 623.12L1402.0 623.4L1401.28 623.68L1401.0 624.4L1400.72 623.68L1400.0 623.4L1400.72 623.12Z" fill="#fff"/><circle cx="1444" cy="626.6" r="14.3" fill="#b9b9b9"/><circle cx="1444" cy="626.6" r="13.6" fill="#8d8d8d"/><circle cx="1444" cy="626.6" r="12" fill="#444444"/><path d="M1445.2 620.6A8 8 0 1 1 1456.5 628.1L1452.4 633.1H1449.2L1446.2 627.1Z" fill="#8a8a8a"/><rect x="1449.4" y="633.8000000000001" width="2.8" height="2.6" fill="#8a8a8a"/><path d="M1433.5 631.8000000000001A2 2 0 0 1 1436 629.2A3 3 0 0 1 1441.4 628.8000000000001A2.2 2.2 0 0 1 1443.8 631.8000000000001Z" fill="#f2f2f2"/><path d="M1434 623.2A1.6 1.6 0 0 1 1436.4 621.6A2 2 0 0 1 1439.8 622.0A1.2 1.2 0 0 1 1440.4 623.2Z" fill="#f2f2f2"/><path d="M1454 619.3000000000001L1454.42 620.3800000000001L1455.5 620.8000000000001L1454.42 621.22L1454 622.3000000000001L1453.58 621.22L1452.5 620.8000000000001L1453.58 620.3800000000001Z" fill="#fff"/><path d="M1451.6 618.5L1451.8519999999999 619.148L1452.5 619.4L1451.8519999999999 619.6519999999999L1451.6 620.3L1451.348 619.6519999999999L1450.6999999999998 619.4L1451.348 619.148Z" fill="#fff"/><circle cx="1485.5" cy="626.6" r="14.3" fill="#b9b9b9"/><circle cx="1485.5" cy="626.6" r="13.6" fill="#8d8d8d"/><circle cx="1485.5" cy="626.6" r="12" fill="#444444"/><circle cx="1484.9" cy="627.2" r="10.2" fill="#f2f2f2"/><circle cx="1484.9" cy="627.2" r="8.4" fill="none" stroke="#555" stroke-width="1.1"/><circle cx="1484.9" cy="627.2" r="5.8" fill="none" stroke="#555" stroke-width="1.1"/><circle cx="1484.9" cy="627.2" r="3.2" fill="none" stroke="#555" stroke-width="1.1"/><circle cx="1484.9" cy="627.2" r="1.2" fill="#555"/><path d="M1485.1 627.0L1497.5 614.6" stroke="#4a4a4a" stroke-width="1.6"/><path d="M1494.5 614.1L1499.0 612.6L1501.0 615.0L1496.5 618.4Z" fill="#4a4a4a"/><circle cx="1277" cy="668.6" r="14.3" fill="#b9b9b9"/><circle cx="1277" cy="668.6" r="13.6" fill="#8d8d8d"/><circle cx="1277" cy="668.6" r="12" fill="#444444"/><path d="M1291 654.6Q1282 655.1 1274 663.1L1269 666.6L1272 669.6L1270.5 673.6L1275.5 673.1L1278.5 676.1L1282 671.6Q1290.5 663.6 1291 654.6Z" fill="#8a8a8a"/><circle cx="1284.6" cy="661.4" r="3.5" fill="#f2f2f2"/><path d="M1270.6 673.5000000000001L1270.964 674.436L1271.8999999999999 674.8000000000001L1270.964 675.1640000000001L1270.6 676.1L1270.2359999999999 675.1640000000001L1269.3 674.8000000000001L1270.2359999999999 674.436Z" fill="#fff"/><path d="M1273 676.1L1273.252 676.748L1273.9 677.0L1273.252 677.252L1273 677.9L1272.748 677.252L1272.1 677.0L1272.748 676.748Z" fill="#fff"/><circle cx="1319" cy="668.6" r="14.3" fill="#b9b9b9"/><circle cx="1319" cy="668.6" r="13.6" fill="#8d8d8d"/><circle cx="1319" cy="668.6" r="12" fill="#444444"/><path d="M1311 676.1L1317.2 661.6L1320.2 667.6L1322.6 664.0L1327.2 676.1Z" fill="#8a8a8a"/><path d="M1315.8 665.0L1317.2 661.6L1318.8 664.8000000000001L1317.2 666.0Z" fill="#f2f2f2"/><path d="M1321.6 665.6L1322.6 664.0L1323.6 666.6L1322.6 667.2Z" fill="#f2f2f2"/><path d="M1323.6 659.5L1323.908 660.292L1324.6999999999998 660.6L1323.908 660.908L1323.6 661.7L1323.292 660.908L1322.5 660.6L1323.292 660.292Z" fill="#fff"/><path d="M1321.6 661.3L1321.7959999999998 661.804L1322.3 662.0L1321.7959999999998 662.196L1321.6 662.7L1321.404 662.196L1320.8999999999999 662.0L1321.404 661.804Z" fill="#fff"/><circle cx="1361" cy="668.6" r="14.3" fill="#b9b9b9"/><circle cx="1361" cy="668.6" r="13.6" fill="#8d8d8d"/><circle cx="1361" cy="668.6" r="12" fill="#444444"/><path d="M1361 660.0C1363 661.4 1365.4 662.0 1367.8 662.0V669.6C1367.8 673.8000000000001 1364.6 676.4 1361 678.0C1357.4 676.4 1354.2 673.8000000000001 1354.2 669.6V662.0C1356.6 662.0 1359 661.4 1361 660.0Z" fill="#8a8a8a" stroke="#d5d5d5" stroke-width="1.1"/><path d="M1362.6 668.3000000000001L1363.02 669.3800000000001L1364.1 669.8000000000001L1363.02 670.22L1362.6 671.3000000000001L1362.1799999999998 670.22L1361.1 669.8000000000001L1362.1799999999998 669.3800000000001Z" fill="#fff"/><path d="M1359.4 666.4L1359.68 667.12L1360.4 667.4L1359.68 667.68L1359.4 668.4L1359.1200000000001 667.68L1358.4 667.4L1359.1200000000001 667.12Z" fill="#fff"/><path d="M1362.6 665.3L1362.7959999999998 665.804L1363.3 666.0L1362.7959999999998 666.196L1362.6 666.7L1362.404 666.196L1361.8999999999999 666.0L1362.404 665.804Z" fill="#fff"/><circle cx="1402.6" cy="668.6" r="14.3" fill="#b9b9b9"/><circle cx="1402.6" cy="668.6" r="13.6" fill="#8d8d8d"/><circle cx="1402.6" cy="668.6" r="12" fill="#444444"/><circle cx="1402.6" cy="668.6" r="9.8" fill="#6f6f6f" stroke="#6f6f6f" stroke-width="2" stroke-dasharray="2 1.5"/><path d="M1382.6 668.0L1387.6 666.6L1388.6 664.0Q1402.6 661.2 1416.6 664.0L1417.6 666.6L1422.6 668.0L1420.6 671.6L1422.6 675.2L1417.1999999999998 674.6Q1402.6 671.2 1388.0 674.6L1382.6 675.2L1384.6 671.6Z" fill="#8a8a8a"/><path d="M1405.1999999999998 667.2L1405.984 669.216L1407.9999999999998 670.0L1405.984 670.784L1405.1999999999998 672.8L1404.4159999999997 670.784L1402.3999999999999 670.0L1404.4159999999997 669.216Z" fill="#fff"/><path d="M1399.0 665.7L1399.644 667.356L1401.3 668.0L1399.644 668.644L1399.0 670.3L1398.356 668.644L1396.7 668.0L1398.356 667.356Z" fill="#fff"/><path d="M1402.8 662.4L1403.248 663.552L1404.3999999999999 664.0L1403.248 664.448L1402.8 665.6L1402.3519999999999 664.448L1401.2 664.0L1402.3519999999999 663.552Z" fill="#fff"/><circle cx="1555.1" cy="799.3" r="23.8" fill="#000" opacity="0.06"/><circle cx="1555.1" cy="798.6" r="23.1" fill="#ee6b4d"/><path d="M1547.9 790.2H1558.6A1.3 1.3 0 0 1 1559.9 791.5V799.6H1549.6L1546.6 802.9V791.5A1.3 1.3 0 0 1 1547.9 790.2Z" fill="none" stroke="#fff" stroke-width="1.3" stroke-linejoin="round"/><path d="M1553.4 795.3H1562.8A1.6 1.6 0 0 1 1564.4 796.9V808L1561.3 805.4H1553.4A1.6 1.6 0 0 1 1551.8 803.8V796.9A1.6 1.6 0 0 1 1553.4 795.3Z" fill="#fff"/></svg>
<svg class="abs" style="left:0;top:0;z-index:45" width="1600" height="831" viewBox="0 0 1600 831"><path d="M180.4 521.4V511A1.5 1.5 0 0 1 183.4 511V514.6C184.2 514 185.4 514.2 185.8 515.1C186.6 514.6 187.9 514.9 188.2 515.9C189.3 515.5 190.6 516.2 190.6 517.5V522.5C190.6 525.5 189 527.8 186.5 527.8H184C182.3 527.8 181.2 526.8 180.2 525.5L176.9 521.2C176.3 520.3 177.4 519.2 178.3 519.8Z" fill="#fff" stroke="#1b1b3a" stroke-width="1" stroke-linejoin="round"/><path d="M183.4 514.6V517.6M185.8 515.2V517.6M188.2 516V517.8" stroke="#1b1b3a" stroke-width="0.9" fill="none"/></svg>

<!-- red annotation -->
<div class="abs" style="left:6.3px;top:407.2px;width:206.2px;height:129px;border:6.5px solid #fe0000;border-radius:7px;z-index:40"></div>
<svg class="abs" style="left:0;top:0;z-index:41" width="1600" height="831" viewBox="0 0 1600 831"><path d="M491 506.4H243.5L250 496.5L211 510L250 523.6L243.5 513.5H491Z" fill="#fe0000"/></svg>

<!-- status bar -->
<div class="abs" style="left:0px;top:811px;width:163.5px;height:20px;background:#000;border-radius:0 4px 0 0;z-index:50"></div>
<!-- bottom/edges -->
<div class="abs" style="left:2px;top:826.5px;width:1596px;height:2px;background:#fdfdfd;z-index:30"></div>
<div class="abs" style="left:163.5px;top:828px;width:1436.5px;height:1px;background:#8a8a8a;z-index:55"></div>
<div class="abs" style="left:0;top:829px;width:1600px;height:2px;background:#000;z-index:55"></div>
<div class="abs" style="left:0;top:828px;width:2px;height:3px;background:#000;z-index:55"></div><div class="abs" style="left:1598px;top:828px;width:2px;height:3px;background:#000;z-index:55"></div>
<svg class="abs" style="left:1591px;top:821.4px;z-index:56" width="7" height="7" viewBox="0 0 7 7"><path d="M7 0V7H0A7 7 0 0 0 7 0Z" fill="#000"/></svg>
<div class="abs" style="left:10px;top:829.6px;width:153px;height:1.4px;background:#4c4c4c;z-index:57"></div>
<!-- corner marks -->
<div class="abs" style="left:0;top:6.4px;width:1.8px;height:1.4px;background:#fff;z-index:58"></div>
<div class="abs" style="left:6.4px;top:0;width:1.4px;height:1.8px;background:#fff;z-index:58"></div>
<div class="abs" style="left:1598.2px;top:6.4px;width:1.8px;height:1.4px;background:#fff;z-index:58"></div>
<div class="abs" style="left:1592px;top:0;width:1.4px;height:1.8px;background:#fff;z-index:58"></div>
<div class="abs" style="left:1598.2px;top:822.8px;width:1.8px;height:1.2px;background:#fff;z-index:58"></div>
<div class="abs" style="left:1592.2px;top:829.2px;width:1.2px;height:1.8px;background:#fff;z-index:58"></div>
</body>
</html>
